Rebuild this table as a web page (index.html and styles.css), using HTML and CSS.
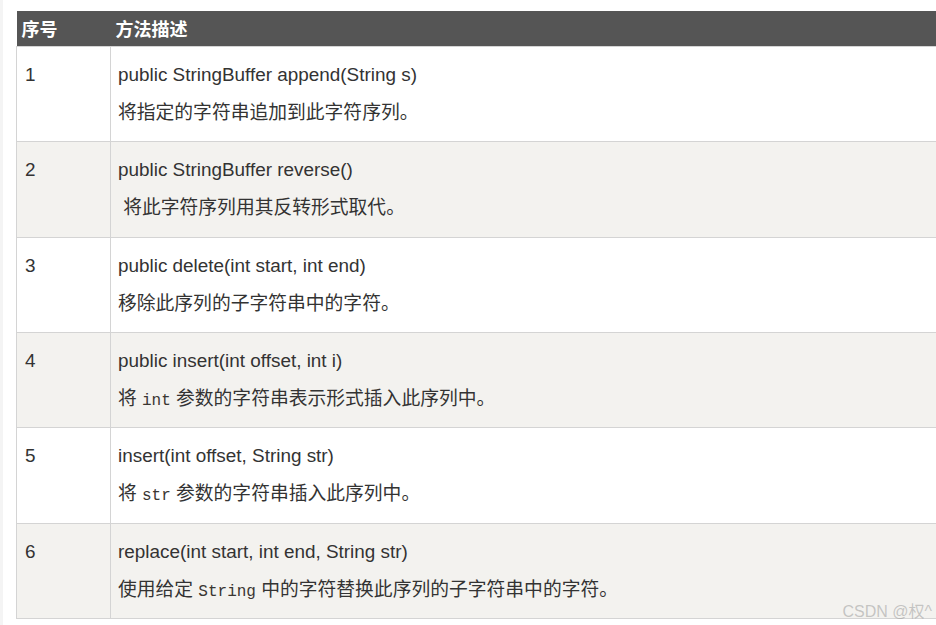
FILE: index.html
```html
<!DOCTYPE html>
<html lang="zh">
<head>
<meta charset="utf-8">
<title>StringBuffer 方法</title>
<link rel="stylesheet" href="styles.css">
</head>
<body>
<div class="page">
  <table class="methods">
    <thead>
      <tr><th class="col-num">序号</th><th>方法描述</th></tr>
    </thead>
    <tbody>
      <tr>
        <td class="col-num"><div class="line sig">1</div></td>
        <td><div class="line sig">public StringBuffer append(String s)</div><div class="line desc">将指定的字符串追加到此字符序列。</div></td>
      </tr>
      <tr class="alt">
        <td class="col-num"><div class="line sig">2</div></td>
        <td><div class="line sig">public StringBuffer reverse()</div><div class="line desc">&nbsp;将此字符序列用其反转形式取代。</div></td>
      </tr>
      <tr>
        <td class="col-num"><div class="line sig">3</div></td>
        <td><div class="line sig">public delete(int start, int end)</div><div class="line desc">移除此序列的子字符串中的字符。</div></td>
      </tr>
      <tr class="alt">
        <td class="col-num"><div class="line sig">4</div></td>
        <td><div class="line sig">public insert(int offset, int i)</div><div class="line desc">将 <code>int</code> 参数的字符串表示形式插入此序列中。</div></td>
      </tr>
      <tr>
        <td class="col-num"><div class="line sig">5</div></td>
        <td><div class="line sig">insert(int offset, String str)</div><div class="line desc">将 <code>str</code> 参数的字符串插入此序列中。</div></td>
      </tr>
      <tr class="alt">
        <td class="col-num"><div class="line sig">6</div></td>
        <td><div class="line sig">replace(int start, int end, String str)</div><div class="line desc">使用给定 <code>String</code> 中的字符替换此序列的子字符串中的字符。</div></td>
      </tr>
    </tbody>
  </table>
  <div class="watermark">CSDN @权^</div>
</div>
</body>
</html>
```
FILE: styles.css
```css
html, body {
  margin: 0;
  padding: 0;
  overflow: hidden;
  background: #fff;
}
body {
  font-family: "Liberation Sans", Arial, "Noto Sans CJK SC", sans-serif;
  color: #333;
}
.page {
  position: relative;
  height: 625px;
  border-left: 3px solid #f4f4f4;
  padding: 11px 0 0 13px;
  box-sizing: border-box;
}
.methods {
  border-collapse: collapse;
  width: 960px;
  table-layout: fixed;
}
.methods th {
  background: #555;
  color: #fff;
  font-weight: bold;
  font-size: 18px;
  text-align: left;
  height: 35px;
  padding: 0 5px;
  line-height: 35px;
  border: 0;
  font-family: "Noto Sans CJK SC", sans-serif;
}
.methods th.col-num {
  width: 84px;
}
.methods td {
  border: 1px solid #d4d4d4;
  vertical-align: top;
  padding: 9px 8px 9.33px 7px;
}
.methods td.col-num {
  padding-left: 8px;
}
.methods tr.alt td {
  background: #f3f2ef;
}
.line {
  height: 38px;
  line-height: 38px;
  white-space: nowrap;
  overflow: visible;
}
.sig {
  font-size: 18.9px;
}
.desc {
  font-size: 18.8px;
}
code {
  font-family: "Liberation Mono", "Courier New", monospace;
  font-size: 16px;
  line-height: 1;
  color: #3a3632;
}
.watermark {
  position: absolute;
  right: 4px;
  top: 598px;
  font-size: 16px;
  color: rgba(150, 150, 150, 0.5);
  font-family: "Liberation Sans", Arial, "Noto Sans CJK SC", sans-serif;
}
```
